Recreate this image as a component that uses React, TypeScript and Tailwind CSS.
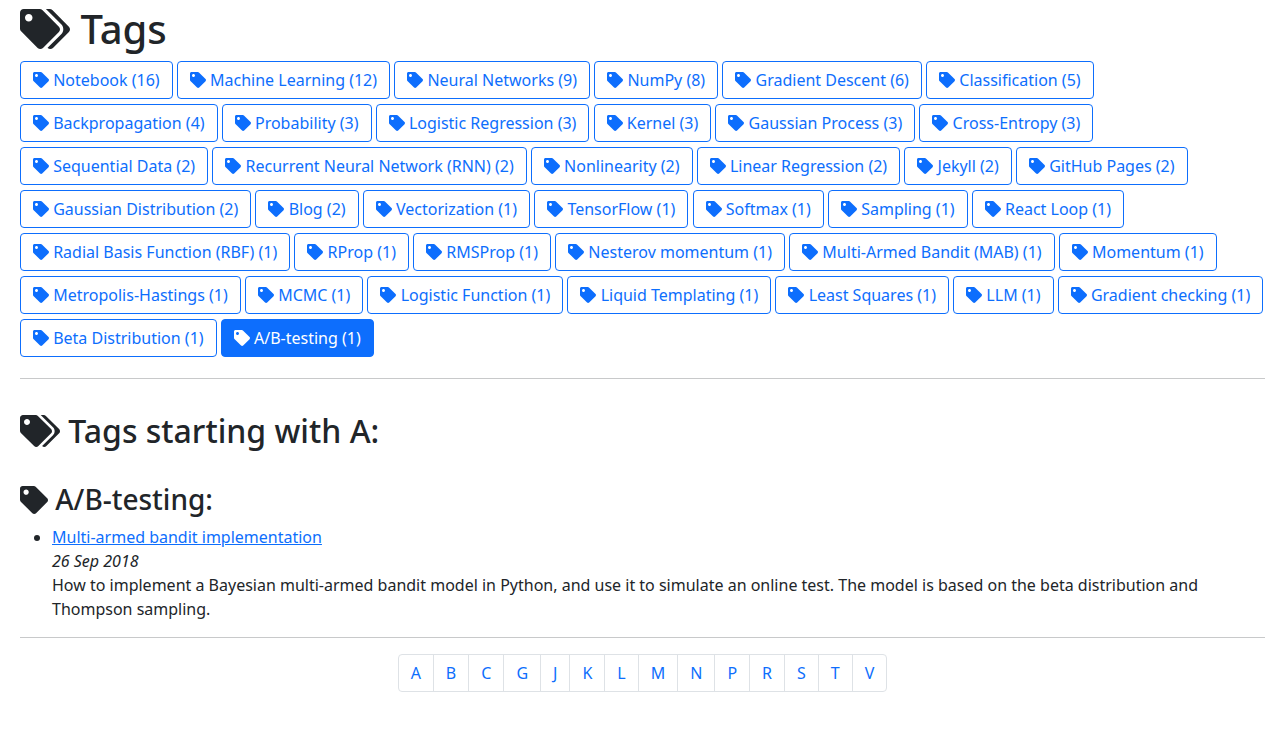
import { Fragment } from "react";
import { FaTag, FaTags } from "react-icons/fa";

const tags: [string, number][] = [
  ["Notebook", 16], ["Machine Learning", 12], ["Neural Networks", 9], ["NumPy", 8],
  ["Gradient Descent", 6], ["Classification", 5], ["Backpropagation", 4], ["Probability", 3],
  ["Logistic Regression", 3], ["Kernel", 3], ["Gaussian Process", 3], ["Cross-Entropy", 3],
  ["Sequential Data", 2], ["Recurrent Neural Network (RNN)", 2], ["Nonlinearity", 2],
  ["Linear Regression", 2], ["Jekyll", 2], ["GitHub Pages", 2], ["Gaussian Distribution", 2],
  ["Blog", 2], ["Vectorization", 1], ["TensorFlow", 1], ["Softmax", 1], ["Sampling", 1],
  ["React Loop", 1], ["Radial Basis Function (RBF)", 1], ["RProp", 1], ["RMSProp", 1],
  ["Nesterov momentum", 1], ["Multi-Armed Bandit (MAB)", 1], ["Momentum", 1],
  ["Metropolis-Hastings", 1], ["MCMC", 1], ["Logistic Function", 1], ["Liquid Templating", 1],
  ["Least Squares", 1], ["LLM", 1], ["Gradient checking", 1], ["Beta Distribution", 1],
  ["A/B-testing", 1],
];

const letters = ["A", "B", "C", "G", "J", "K", "L", "M", "N", "P", "R", "S", "T", "V"];
const active = "A/B-testing";

export default function App() {
  return (
    <main className="pl-5 pr-[22px] pt-[5px] font-['Noto_Sans',sans-serif] text-base text-[#212529]">
      <h1 className="mb-2 text-[40px] leading-12 font-medium">
        <FaTags className="inline-block h-10 w-[50px] align-[-5px]" /> Tags
      </h1>
      <nav aria-label="Tags">
        {tags.map(([name, count]) => (
          <Fragment key={name}>
            <a
              href="#tag"
              className={
                name === active
                  ? "mb-[5px] inline-block rounded-sm border border-[#0d6efd] bg-[#0d6efd] px-3 py-1.5 align-middle text-white"
                  : "mb-[5px] inline-block rounded-sm border border-[#0d6efd] px-3 py-1.5 align-middle text-[#0d6efd]"
              }
            >
              <FaTag className="inline-block size-4 align-[-2px]" /> {name} ({count})
            </a>{" "}
          </Fragment>
        ))}
      </nav>
      <hr className="mt-4 mb-[33px] border-[#c8c9ca]" />
      <h2 className="text-[32px] leading-[38px] font-medium">
        <FaTags className="inline-block h-8 w-10 align-[-4px]" /> Tags starting with A:
      </h2>
      <h3 className="mt-8 mb-[9px] text-[28px] leading-[34px] font-medium">
        <FaTag className="inline-block size-7 align-[-4px]" /> A/B-testing:
      </h3>
      <ul className="mb-4 list-disc pl-8">
        <li>
          <a href="#post" className="text-[#0d6efd] underline">Multi-armed bandit implementation</a>
          <br />
          <em>26 Sep 2018</em>
          <p>
            How to implement a Bayesian multi-armed bandit model in Python, and use it to simulate an
            online test. The model is based on the beta distribution and Thompson sampling.
          </p>
        </li>
      </ul>
      <hr className="mb-4 border-[#c8c9ca]" />
      <nav aria-label="Letters" className="flex justify-center">
        <ul className="flex">
          {letters.map((letter) => (
            <li key={letter} className="group -ml-px first:ml-0">
              <a
                href="#letter"
                className="block border border-[#dee2e6] px-3 py-1.5 text-[#0d6efd] group-first:rounded-l-sm group-last:rounded-r-sm"
              >
                {letter}
              </a>
            </li>
          ))}
        </ul>
      </nav>
    </main>
  );
}
